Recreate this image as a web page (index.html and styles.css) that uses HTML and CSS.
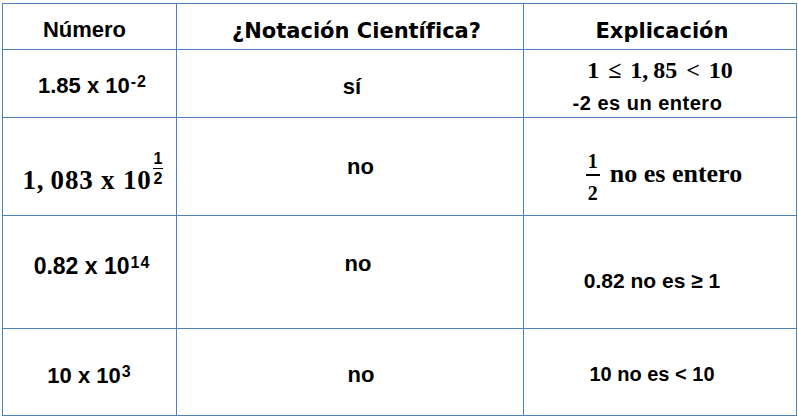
FILE: index.html
```html
<!DOCTYPE html>
<html lang="es">
<head>
<meta charset="utf-8">
<title>Notación científica</title>
<link rel="stylesheet" href="styles.css">
</head>
<body>
<div class="table">
  <div class="cell h-num">Número</div>
  <div class="cell head h-not">¿Notación Científica?</div>
  <div class="cell head h-exp">Explicación</div>

  <div class="cell num1"><span>1.85 x 10<sup class="sup">-2</sup></span></div>
  <div class="cell ans1">sí</div>
  <div class="cell exp1"><span class="math m1">1 ≤ 1,&thinsp;85 &lt; 10</span><span class="note">-2 es un entero</span></div>

  <div class="cell num2"><div class="mrow"><span class="math m2">1,&thinsp;083 x 10</span><span class="supfrac"><span class="fn">1</span><span class="fd">2</span></span></div></div>
  <div class="cell ans2">no</div>
  <div class="cell exp2"><span class="frac"><span class="fn">1</span><span class="fd">2</span></span><span class="math m3">no es entero</span></div>

  <div class="cell num3"><span>0.82 x 10<sup class="sup">14</sup></span></div>
  <div class="cell ans3">no</div>
  <div class="cell exp3">0.82 no es ≥ 1</div>

  <div class="cell num4"><span>10 x 10<sup class="sup">3</sup></span></div>
  <div class="cell ans4">no</div>
  <div class="cell exp4">10 no es &lt; 10</div>
</div>
</body>
</html>
```

FILE: styles.css
```css
html, body {
  background: #ffffff;
}
body {
  margin: 3px 0 0 2px;
  font-family: "Liberation Sans", Arial, sans-serif;
  color: #000;
}
.table {
  display: grid;
  grid-template-columns: 173px 346px 272px;
  grid-template-rows: 45px 67px 97px 112px 86px;
  gap: 1px;
  padding: 1px;
  width: max-content;
  background: #4f81bd;
  box-shadow: -2px 0 0 #c9d7eb;
}
.cell {
  background: #fff;
  display: flex;
  flex-direction: column;
  align-items: center;
  font-weight: bold;
  font-size: 22px;
  line-height: 1;
  white-space: nowrap;
}
.head {
  font-family: "DejaVu Sans", Verdana, sans-serif;
  font-size: 21px;
}
.sup {
  font-size: 16px;
  line-height: 1;
  vertical-align: 6px;
  letter-spacing: 1px;
  margin-left: 1px;
}
.math {
  font-family: "Liberation Serif", "Times New Roman", serif;
  font-weight: bold;
}

/* header */
.h-num { padding: 15px 10px 0 0; }
.h-not { padding: 17px 0 0 13px; }
.h-exp { padding: 17px 0 0 4px; }

/* row 1 */
.num1 { padding: 24px 0 0 6px; }
.ans1 { padding: 26px 0 0 4px; }
.exp1 { padding: 8px 0 0 0; }
.m1 {
  font-size: 24px;
  word-spacing: 3px;
}
.note {
  font-size: 20px;
  letter-spacing: 0.5px;
  margin: 11px 25px 0 0;
}

/* row 2 */
.num2 { padding: 49px 0 0 7px; }
.mrow {
  display: flex;
  align-items: flex-start;
}
.m2 {
  font-size: 27px;
  letter-spacing: 0.8px;
}
.supfrac {
  display: flex;
  flex-direction: column;
  align-items: center;
  font-family: "Liberation Sans", sans-serif;
  font-size: 16px;
  margin: -16px 0 0 1px;
}
.supfrac .fn {
  padding: 0 1px 1px;
  border-bottom: 1.5px solid #000;
}
.supfrac .fd {
  padding-top: 2px;
}
.ans2 { padding: 38px 0 0 21px; }
.exp2 {
  flex-direction: row;
  align-items: flex-start;
  justify-content: center;
  padding: 33px 0 0 8px;
}
.frac {
  display: flex;
  flex-direction: column;
  align-items: stretch;
  font-family: "Liberation Serif", serif;
  font-size: 20px;
  text-align: center;
  margin-right: 10px;
}
.frac .fn {
  padding: 0 2px 3px;
  border-bottom: 2px solid #000;
}
.frac .fd {
  padding-top: 7px;
}
.m3 {
  font-size: 26px;
  margin-top: 10px;
}

/* row 3 */
.num3 { padding: 39px 0 0 5px; font-size: 23px; }
.num3 .sup { font-size: 16px; }
.ans3 { padding: 37px 0 0 16px; }
.exp3 { padding: 54px 16px 0 0; font-size: 21px; }

/* row 4 */
.num4 { padding: 35px 0 0 0; }
.ans4 { padding: 35px 0 0 22px; }
.exp4 { padding: 35px 16px 0 0; font-size: 20px; }
```
